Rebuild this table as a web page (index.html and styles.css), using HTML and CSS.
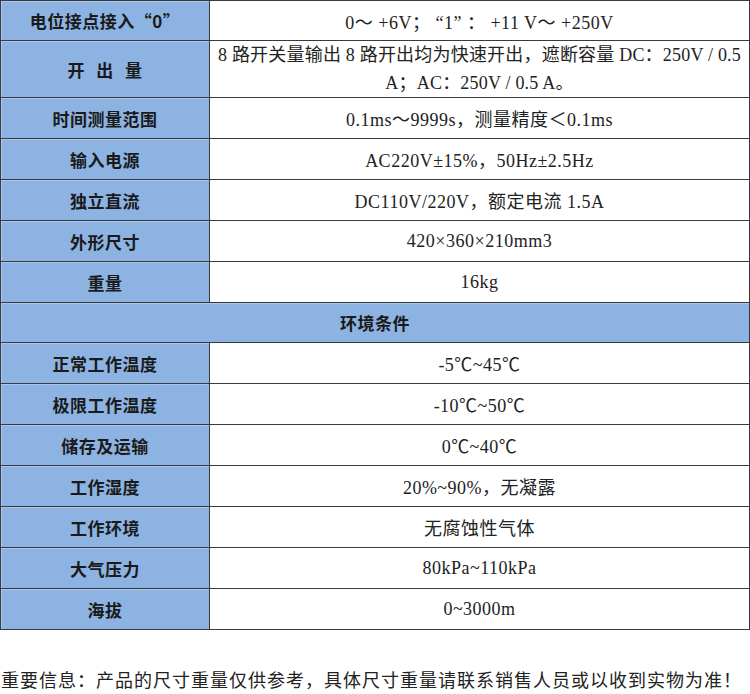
FILE: index.html
```html
<!DOCTYPE html>
<html lang="zh-CN">
<head>
<meta charset="utf-8">
<title>技术参数</title>
<link rel="stylesheet" href="styles.css">
</head>
<body>
<table class="spec">
  <tbody>
    <tr class="r-first"><th>电位接点接入“0”</th><td>0～ +6V； “1” ： +11 V～ +250V</td></tr>
    <tr class="r-tall"><th class="spaced">开 出 量</th><td class="two-line">8 路开关量输出 8 路开出均为快速开出，遮断容量 DC：250V / 0.5<br>A；AC：250V / 0.5 A。</td></tr>
    <tr><th>时间测量范围</th><td>0.1ms～9999s，测量精度＜0.1ms</td></tr>
    <tr><th>输入电源</th><td>AC220V±15%，50Hz±2.5Hz</td></tr>
    <tr><th>独立直流</th><td>DC110V/220V，额定电流 1.5A</td></tr>
    <tr><th>外形尺寸</th><td>420×360×210mm3</td></tr>
    <tr><th>重量</th><td>16kg</td></tr>
    <tr class="r-section"><th colspan="2">环境条件</th></tr>
    <tr><th>正常工作温度</th><td>-5℃~45℃</td></tr>
    <tr><th>极限工作温度</th><td>-10℃~50℃</td></tr>
    <tr><th>储存及运输</th><td>0℃~40℃</td></tr>
    <tr><th>工作湿度</th><td>20%~90%，无凝露</td></tr>
    <tr><th>工作环境</th><td>无腐蚀性气体</td></tr>
    <tr><th>大气压力</th><td>80kPa~110kPa</td></tr>
    <tr><th>海拔</th><td>0~3000m</td></tr>
  </tbody>
</table>
<p class="note">重要信息：产品的尺寸重量仅供参考，具体尺寸重量请联系销售人员或以收到实物为准！</p>
</body>
</html>
```

FILE: styles.css
```css
html, body {
  margin: 0;
  padding: 0;
  background: #ffffff;
}

body {
  width: 750px;
  height: 694px;
  overflow: hidden;
  font-family: "Liberation Serif", "Noto Sans CJK SC", serif;
  color: #222222;
}

.spec {
  width: 750px;
  border-collapse: collapse;
  table-layout: fixed;
}

.spec th,
.spec td {
  border: 1px solid #3a3a3a;
  padding: 0;
  height: 40px;
  text-align: center;
  vertical-align: middle;
}

.spec th {
  width: 208px;
  background: #8db3e2;
  box-shadow: inset 1px 1px 0 #a8c6ee;
  font-family: "Noto Sans CJK SC", "Liberation Sans", sans-serif;
  font-weight: 700;
  font-size: 17px;
  color: #1a1a1a;
  letter-spacing: 0.5px;
}

.spec th.spaced {
  word-spacing: 7px;
}

.spec td {
  font-size: 18px;
  letter-spacing: 0.5px;
  color: #222222;
}

.spec .r-first th,
.spec .r-first td {
  height: 39px;
}

.spec .r-tall th,
.spec .r-tall td {
  height: 56px;
}

.spec .two-line {
  line-height: 28px;
  letter-spacing: 0.2px;
  white-space: nowrap;
}

.spec .r-section th {
  height: 39px;
}

.note {
  margin: 37px 0 0 1px;
  font-family: "Noto Sans CJK SC", sans-serif;
  font-size: 18px;
  letter-spacing: 1px;
  color: #222222;
  line-height: 24px;
  white-space: nowrap;
}
```
